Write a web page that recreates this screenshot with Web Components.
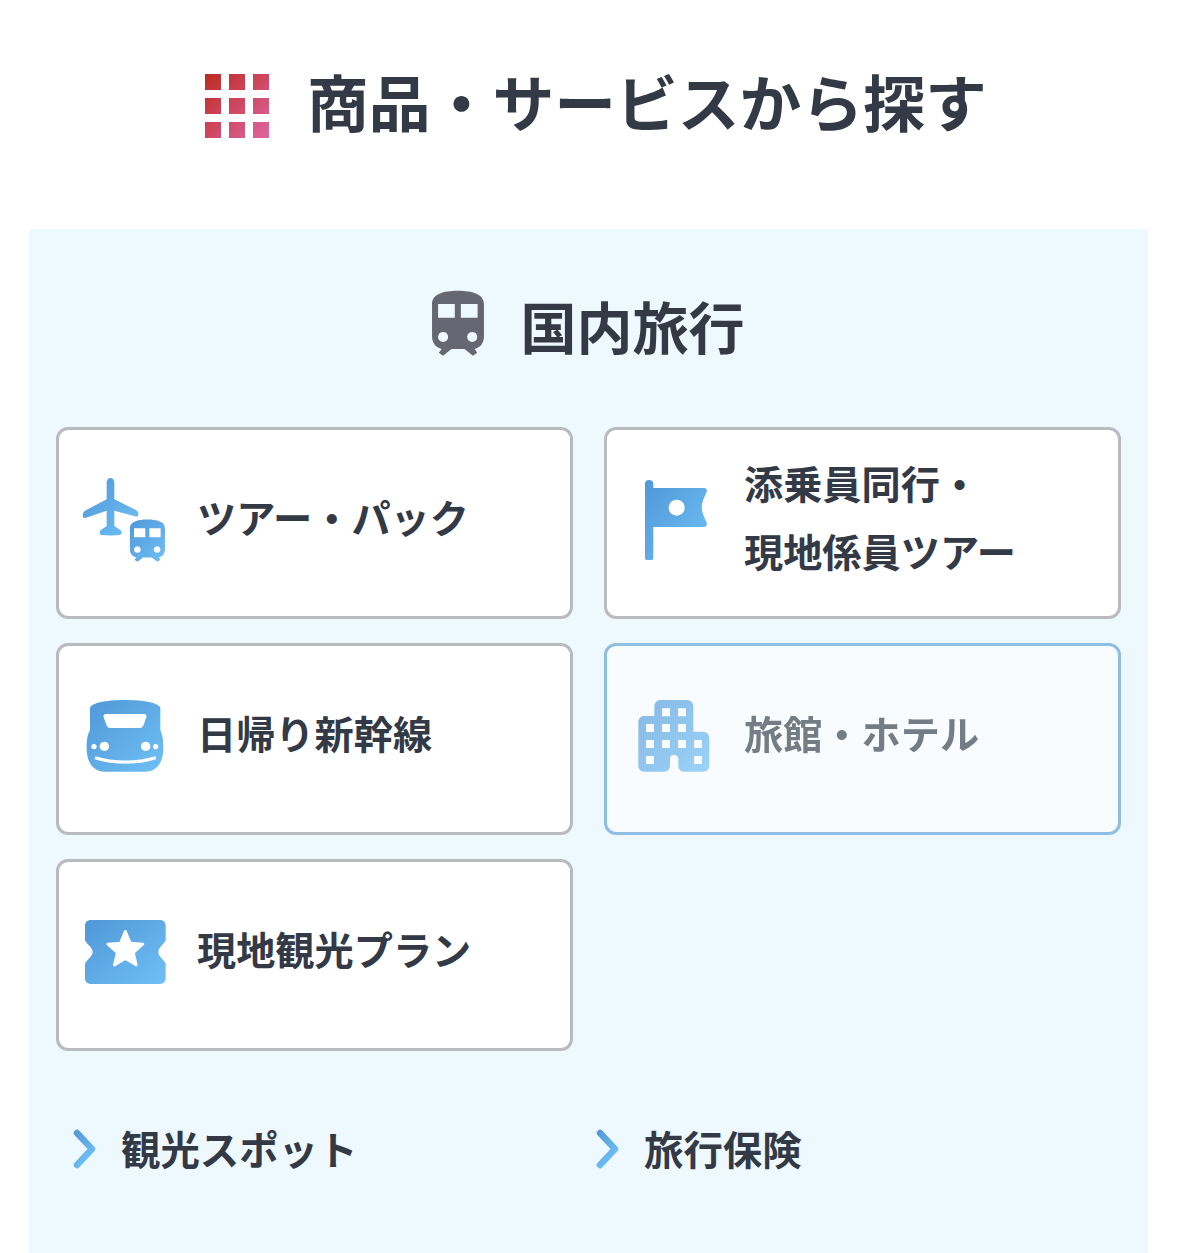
<!DOCTYPE html>
<html lang="ja"><head><meta charset="utf-8"><title>商品・サービスから探す</title>
<style>
html,body{margin:0;background:#fff}
body{font-family:"Noto Sans CJK JP","Noto Sans",sans-serif;color:#333a46;width:1178px;height:1253px;overflow:hidden}
</style></head><body>
<x-section-title>商品・サービスから探す</x-section-title>
<x-panel heading="国内旅行">
  <x-card icon="plane">ツアー・パック</x-card>
  <x-card icon="flag" right>添乗員同行・<br>現地係員ツアー</x-card>
  <x-card icon="bullet">日帰り新幹線</x-card>
  <x-card icon="hotel" right dim>旅館・ホテル</x-card>
  <x-card icon="ticket">現地観光プラン</x-card>
  <x-link slot="links">観光スポット</x-link>
  <x-link slot="links">旅行保険</x-link>
</x-panel>
<script>
const grad=(id,a='#5097d8',b='#6fc0f5')=>`<defs><linearGradient id="${id}" x1="0" y1="0" x2="1" y2="1"><stop offset="0" stop-color="${a}"/><stop offset="1" stop-color="${b}"/></linearGradient></defs>`;
const trainPath='M38 72C38 42 72 32 115 32C158 32 193 42 193 72V168C193 188 182 202 165 206L173 217L160 226L135 206H96L71 226L58 217L67 206C50 202 38 188 38 168ZM56 72V113H106V72ZM124 72V113H174V72ZM71 155a15 15 0 1 0 .01 0ZM158 155a15 15 0 1 0 .01 0Z';
const ICONS={
plane:`<svg viewBox="81 156 288 288">${grad('g')}<g fill="url(#g)"><path d="M181 174c7 0 12 6 12 14V238L258 270c6 4 8 10 7 14c-1 5-5 7-10 5L193 272V318L212 331c4 3 4 11-2 14c-18 2-38 2-56 0c-6-3-6-11-2-14L170 318V272L108 293c-6 2-10 0-10-7c0-5 3-11 7-14L170 238V188c0-8 5-14 11-14Z"/><path fill-rule="evenodd" transform="translate(214 278) scale(.678 .652)" d="${trainPath}"/></g></svg>`,
flag:`<svg viewBox="75 156 288 288">${grad('g')}<path fill="url(#g)" fill-rule="evenodd" d="M135 190c0-6 5-10 12-10c8 0 13 5 13 11V204H312c7 0 10 5 8 11C313 232 305 247 305 262C305 277 313 292 320 308c2 7-1 13-8 13H160V415c0 3-2 5-5 5H140c-3 0-5-2-5-5ZM230 239a24 24 0 1 0 .01 0Z"/></svg>`,
bullet:`<svg viewBox="81 144 288 288">${grad('g')}<path fill="url(#g)" fill-rule="evenodd" d="M120 205C120 190 165 180 225 180C285 180 331 190 331 205V270C338 285 340 300 340 325C340 368 320 395 285 395H165C130 395 110 368 110 325C110 300 112 285 120 270ZM168 222C162 222 159 226 161 232L169 254C171 261 176 264 183 264H267C274 264 279 261 281 254L289 232C291 226 288 222 282 222ZM163 305a14 14 0 1 0 .01 0ZM287 305a14 14 0 1 0 .01 0ZM132 312a8 8 0 1 0 .01 0ZM317 312a8 8 0 1 0 .01 0ZM136 349C190 366 262 366 316 349L318 358C262 376 190 376 134 358Z"/></svg>`,
hotel:`<svg viewBox="75 144 288 288">${grad('g')}<path fill="url(#g)" fill-rule="evenodd" d="M163 200C163 188 171 180 183 180H260C272 180 280 188 280 200V275H308C320 275 328 283 328 295V378C328 388 320 395 310 395H252C242 395 235 388 235 378V355C235 349 230 345 222 345C215 345 210 349 210 355V378C210 388 202 395 192 395H133C123 395 115 388 115 378V246C115 236 123 228 133 228H163ZM186 205V229H210V205ZM234 205V229H258V205ZM138 252V276H162V252ZM186 252V276H210V252ZM234 252V276H258V252ZM138 300V324H162V300ZM186 300V324H210V300ZM234 300V324H258V300ZM282 300V324H306V300ZM138 348V372H162V348ZM282 348V372H306V348Z"/></svg>`,
ticket:`<svg viewBox="81 42 288 288">${grad('g')}<path fill="url(#g)" d="M122 90H330C340 90 347 97 347 107V150C347 158 325 172 325 186C325 200 347 214 347 222V265C347 275 340 282 330 282H122C112 282 105 275 105 265V222C105 214 128 200 128 186C128 172 105 158 105 150V107C105 97 112 90 122 90Z"/><polygon fill="#fff" stroke="#fff" stroke-width="8" stroke-linejoin="round" points="226,124 241,159 279,162 250,188 259,225 226,206 193,225 202,188 173,162 211,159"/></svg>`
};
function el(name,css,html){
  customElements.define(name,class extends HTMLElement{
    constructor(){super();const r=this.attachShadow({mode:'open'});r.innerHTML=`<style>${css}</style>${typeof html==='function'?html(this):html}`;}
  });
}
const squares=[0,24,48].flatMap(y=>[0,24,48].map(x=>`<rect x="${x}" y="${y}" width="16" height="16"/>`)).join('');
el('x-section-title',`
:host{display:flex;align-items:center;height:229px;box-sizing:border-box;padding:0 0 17px 205px;gap:38px}
svg{width:64px;height:64px;flex:none;filter:blur(.3px)}
h2{margin:0 0 10px;font-size:61.8px;font-weight:700;line-height:1;white-space:nowrap}
`,`<svg viewBox="0 0 64 64"><defs><linearGradient id="r" gradientUnits="userSpaceOnUse" x1="0" y1="0" x2="64" y2="64"><stop offset="0" stop-color="#bd2a22"/><stop offset="1" stop-color="#df669f"/></linearGradient></defs><g fill="url(#r)">${squares}</g></svg><h2><slot></slot></h2>`);
el('x-panel',`
:host{display:block;margin:0 30px 0 29px;background:#eef8ff;height:1024px;overflow:hidden}
header{display:flex;justify-content:center;align-items:center;gap:36px;height:198px;box-sizing:border-box;padding-bottom:6px}
header svg{width:54px;height:66px;flex:none;margin-bottom:4px;margin-left:-2px}
h3{margin:0;font-size:56px;font-weight:700;line-height:1;white-space:nowrap}
.cards{display:grid;grid-template-columns:1fr 1fr;grid-auto-rows:192px;gap:24px 31px;padding:0 27px}
.links{display:grid;grid-template-columns:523px 1fr;padding:63px 28px 0 45px}
`,h=>`<header><svg viewBox="38 30 155 197"><path fill="#656873" fill-rule="evenodd" d="${trainPath}"/></svg><h3>${h.getAttribute('heading')}</h3></header><div class="cards"><slot></slot></div><div class="links"><slot name="links"></slot></div>`);
el('x-card',`
:host{display:flex;align-items:center;box-sizing:border-box;background:#fff;border:3px solid #b9bbc0;border-radius:12px;padding:0 8px 6px 18px;gap:24px;font-size:39.2px;font-weight:700;line-height:68px}
:host([right]){gap:23px}
:host([dim]){opacity:.65;border-color:#5ca0d4}
.i{flex:none;width:96px;height:96px}
.i svg{display:block;width:96px;height:96px;filter:blur(.5px)}
.t{margin-bottom:9px}
`,c=>`<div class="i">${ICONS[c.getAttribute('icon')]}</div><div class="t"><slot></slot></div>`);
el('x-link',`
:host{display:flex;align-items:center;gap:25px;font-size:39.4px;font-weight:700;line-height:68px}
svg{width:23px;height:40px;flex:none;margin-left:-1px;margin-top:1px}
`,`<svg viewBox="0 0 23 40"><defs><linearGradient id="c" gradientUnits="userSpaceOnUse" x1="0" y1="0" x2="23" y2="20"><stop offset="0" stop-color="#4f94d4"/><stop offset="1" stop-color="#6cbcf2"/></linearGradient></defs><path d="M4 4L19 20L4 36" fill="none" stroke="url(#c)" stroke-width="6.5" stroke-linecap="round" stroke-linejoin="round"/></svg><span><slot></slot></span>`);
</script>
</body></html>
